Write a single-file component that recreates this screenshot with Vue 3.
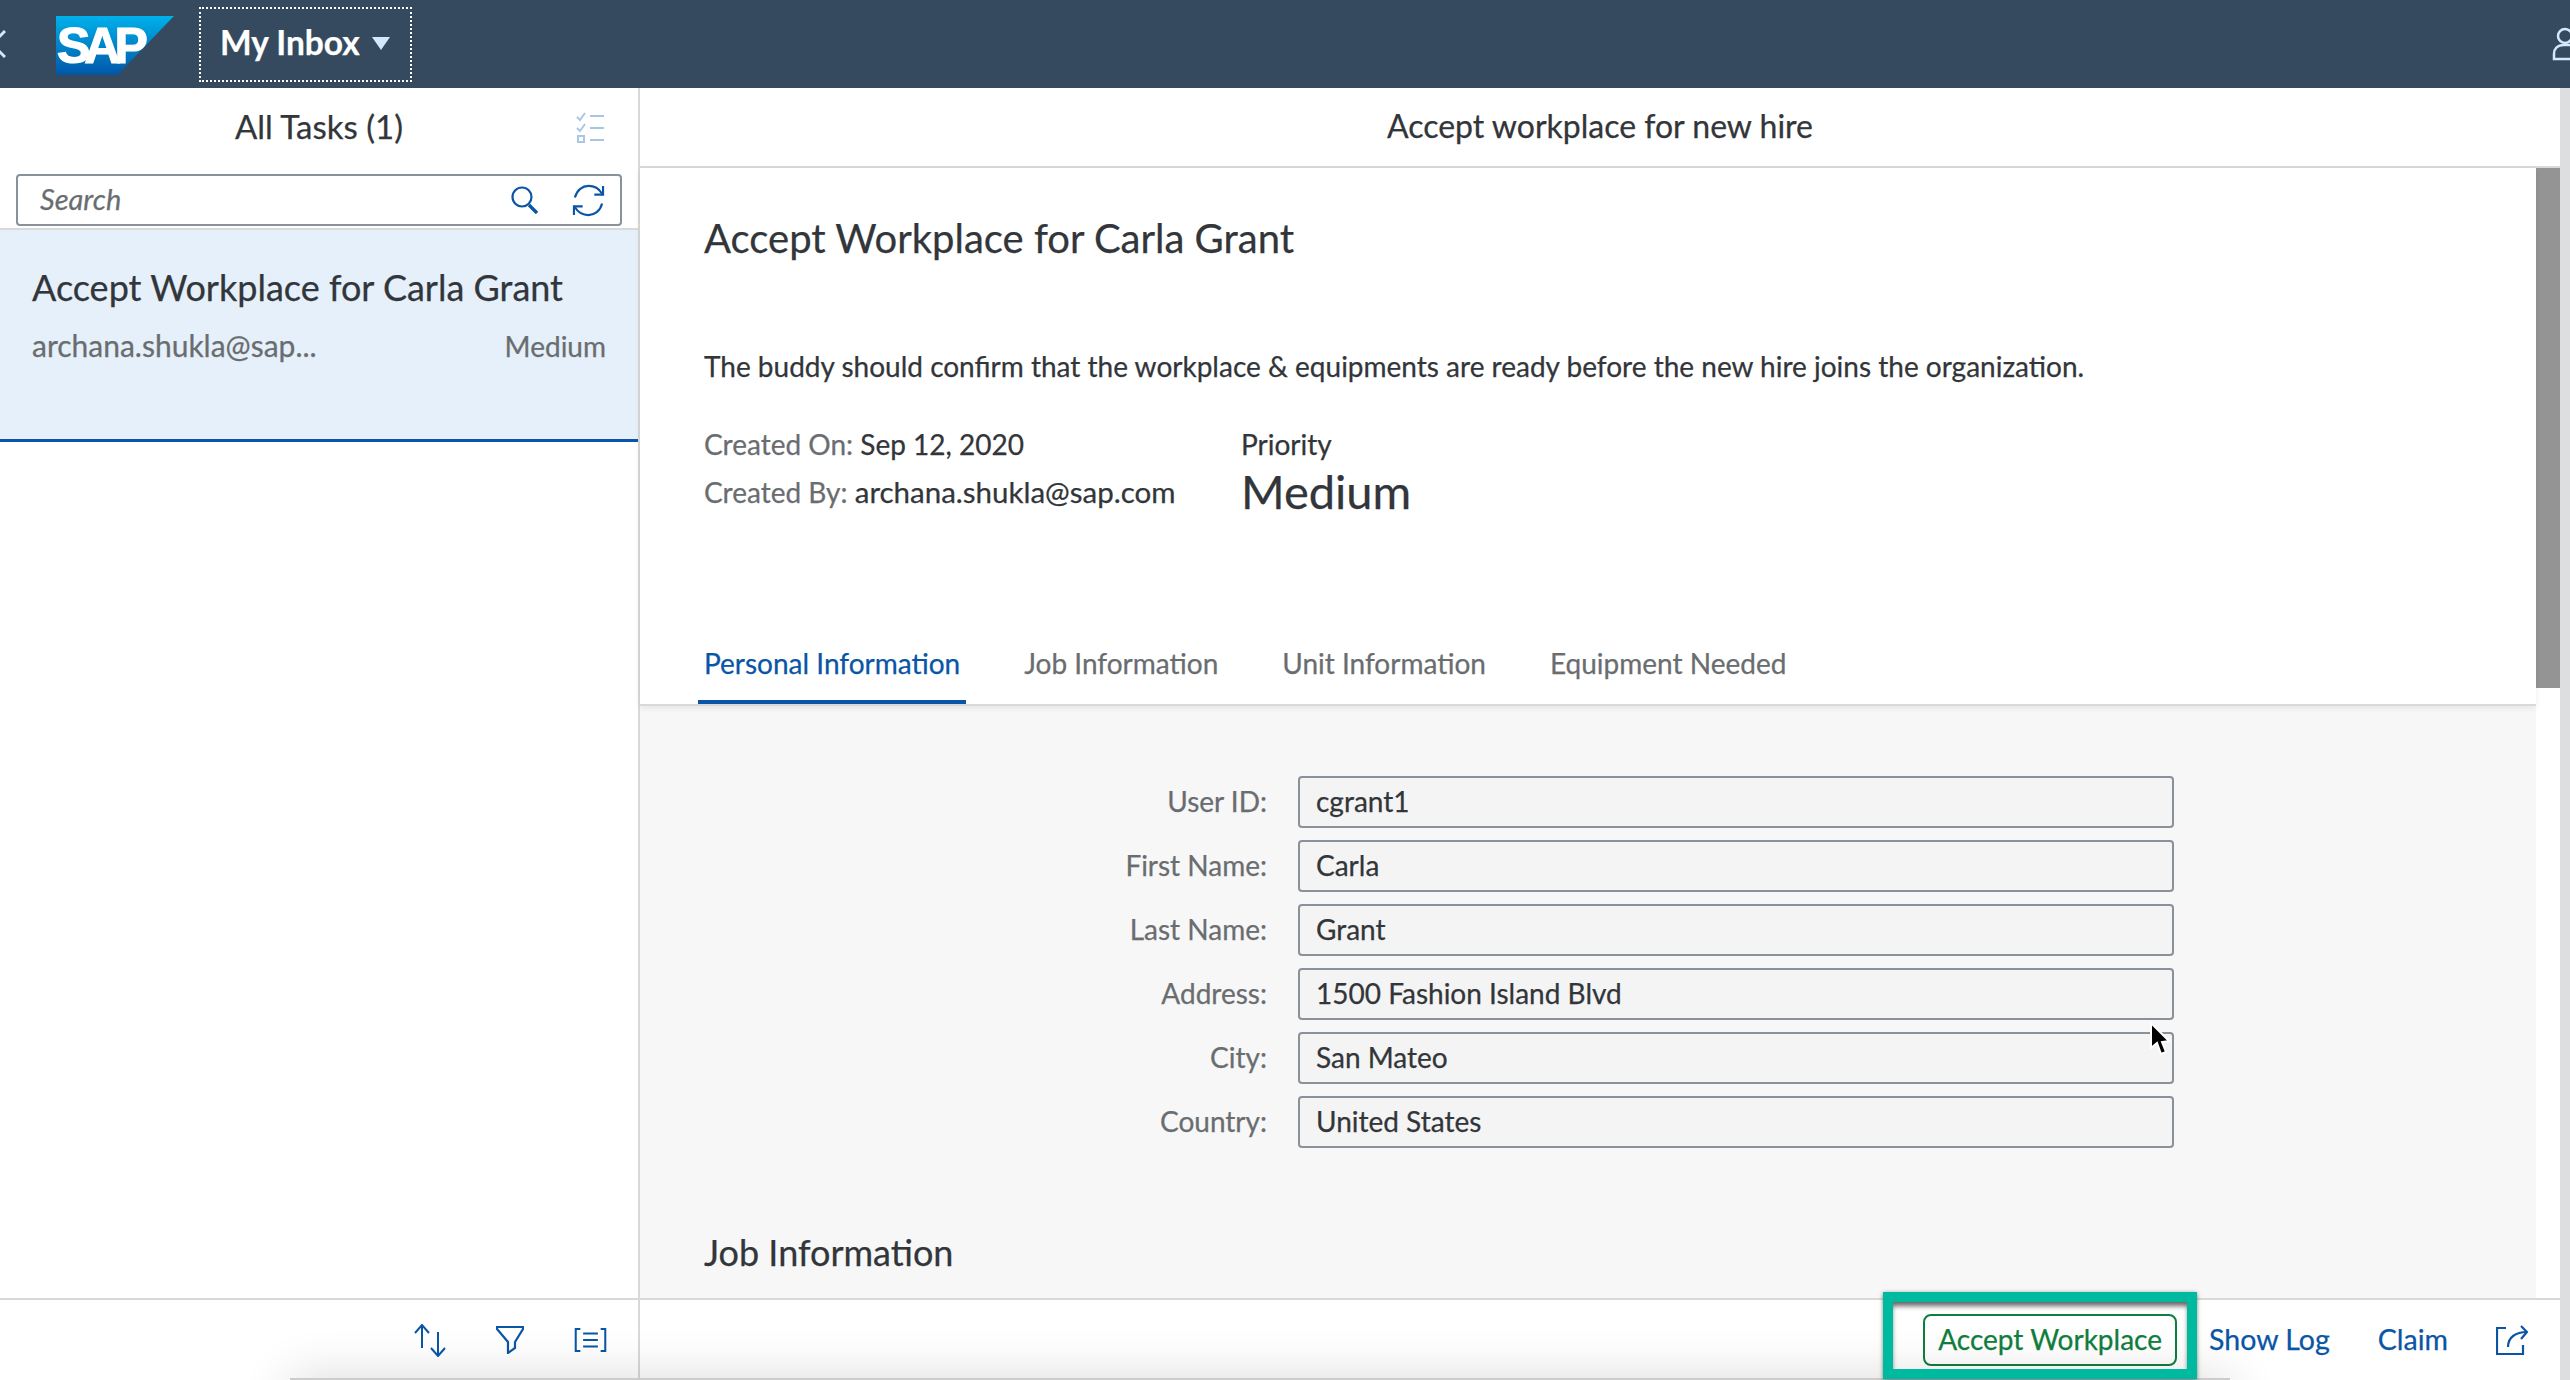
<script setup>
const fields = [
  { label: 'User ID:', value: 'cgrant1' },
  { label: 'First Name:', value: 'Carla' },
  { label: 'Last Name:', value: 'Grant' },
  { label: 'Address:', value: '1500 Fashion Island Blvd' },
  { label: 'City:', value: 'San Mateo' },
  { label: 'Country:', value: 'United States' }
]

const tabs = ['Personal Information', 'Job Information', 'Unit Information', 'Equipment Needed']
</script>

<template>
  <div class="page">
    <header class="shell">
      <svg class="back" width="6" height="28" viewBox="0 0 6 28"><path d="M5 1 L-8 14 L5 27" fill="none" stroke="#d1e8ff" stroke-width="3" /></svg>
      <div class="logo"><span>SAP</span></div>
      <button class="app-title">My Inbox <i class="caret"></i></button>
      <svg class="user" width="18" height="34" viewBox="0 0 18 34"><circle cx="13" cy="9" r="7" fill="none" stroke="#d1e8ff" stroke-width="2.5" /><path d="M18 18 H12 C5 18 2 22 2 27 V32 H18" fill="none" stroke="#d1e8ff" stroke-width="2.5" /></svg>
    </header>

    <div class="body">
      <aside class="master">
        <div class="bar-title master-title">
          <span>All Tasks (1)</span>
          <svg class="multi" width="30" height="32" viewBox="0 0 30 32" fill="none" stroke="#a9c6e6" stroke-width="2">
            <path d="M1 6 L4 9 L9 2" /><path d="M14 5 H28" />
            <path d="M1 17 L4 20 L9 13" /><path d="M14 17 H28" />
            <rect x="2" y="25" width="6" height="6" /><path d="M14 29 H28" />
          </svg>
        </div>
        <div class="search-row">
          <div class="search">
            <span class="placeholder">Search</span>
            <svg width="28" height="28" viewBox="0 0 28 28" fill="none" stroke="#0a55a5" stroke-width="2.2">
              <circle cx="11" cy="11" r="9.5" /><path d="M18 19 L26 27" stroke-width="3.4" />
            </svg>
            <svg width="33" height="33" viewBox="0 0 34 34" fill="none" stroke="#0a55a5" stroke-width="2.2">
              <path d="M3 14 C5 6 11 2 17 2 C23 2 28 5 31 10" /><path d="M32 2 V11 H23" />
              <path d="M31 20 C29 28 23 32 17 32 C11 32 6 29 3 24" /><path d="M2 32 V23 H11" />
            </svg>
          </div>
        </div>
        <div class="task">
          <div class="task-title">Accept Workplace for Carla Grant</div>
          <div class="task-meta">
            <span class="task-owner">archana.shukla@sap...</span>
            <span>Medium</span>
          </div>
        </div>
        <div class="master-fill"></div>
        <footer class="bar-foot master-foot">
          <svg width="32" height="33" viewBox="0 0 32 33" fill="none" stroke="#0a55a5" stroke-width="2">
            <path d="M8 1 V24" /><path d="M1 9 L8 1 L15 9" />
            <path d="M24 8 V32" /><path d="M17 24 L24 32 L31 24" />
          </svg>
          <svg width="28" height="28" viewBox="0 0 28 28" fill="none" stroke="#0a55a5" stroke-width="2.2">
            <path d="M1 1 H27 V3 L19 16 V22 L12 27 V16 L1 3 Z" />
          </svg>
          <svg width="33" height="24" viewBox="0 0 34 26" fill="none" stroke="#0a55a5" stroke-width="2.2">
            <path d="M6 1 H1 V25 H6" /><path d="M28 1 H33 V25 H28" />
            <path d="M9 6 H25 M9 13 H25 M9 20 H25" />
          </svg>
        </footer>
      </aside>

      <main class="detail">
        <div class="bar-title detail-title">Accept workplace for new hire</div>
        <div class="detail-scroll">
          <section class="head">
            <h1>Accept Workplace for Carla Grant</h1>
            <p class="desc">The buddy should confirm that the workplace &amp; equipments are ready before the new hire joins the organization.</p>
            <div class="attrs">
              <div class="attr-col">
                <div><span class="muted">Created On:</span> Sep 12, 2020</div>
                <div><span class="muted">Created By:</span> <span class="email">archana.shukla@sap.com</span></div>
              </div>
              <div class="priority">
                <div>Priority</div>
                <div class="priority-val">Medium</div>
              </div>
            </div>
            <nav class="tabs">
              <span v-for="(t, i) in tabs" :key="t" class="tab" :class="{ active: i === 0 }">{{ t }}</span>
            </nav>
          </section>
          <section class="content">
            <div class="form">
              <div v-for="f in fields" :key="f.label" class="row">
                <label>{{ f.label }}</label>
                <div class="input">{{ f.value }}</div>
              </div>
            </div>
            <h2>Job Information</h2>
          </section>
          <div class="scroll-track"><div class="scroll-thumb"></div></div>
        </div>
        <footer class="bar-foot detail-foot">
          <button class="accept">Accept Workplace<span class="frame"></span></button>
          <button class="link">Show Log</button>
          <button class="link">Claim</button>
          <svg class="share" width="32" height="30" viewBox="0 0 32 30" fill="none" stroke="#0a55a5" stroke-width="2.2">
            <path d="M10 3 H1 V29 H27 V20" /><path d="M12 22 C12 12 20 7 31 7" /><path d="M25 1 L31 7 L25 14" />
          </svg>
        </footer>
      </main>
      <div class="edge"></div>
    </div>

    <div class="under-shadow"></div>
    <svg class="cursor" width="24" height="36" viewBox="0 0 24 36">
      <path d="M3 2 V27 L9 22 L13 33 L18 31 L14 21 L21 20 Z" fill="#000" stroke="#fff" stroke-width="2" />
    </svg>
  </div>
</template>

<style>
html, body { margin: 0; background: #fff; }
</style>

<style scoped>
.page {
  position: relative;
  width: 2570px;
  height: 1380px;
  overflow: hidden;
  display: flex;
  flex-direction: column;
  font-family: Lato, "Open Sans", sans-serif;
  font-size: 28px;
  color: #32363a;
  -webkit-text-stroke: 0.25px;
}

.shell {
  height: 88px;
  flex: none;
  background: #354a5f;
  display: flex;
  align-items: center;
  position: relative;
}

.back { margin-right: 50px; }

.logo {
  width: 118px;
  height: 59px;
  background: linear-gradient(#00b1eb, #0057a8);
  clip-path: polygon(0 0, 100% 0, 52% 100%, 0 100%);
  display: flex;
  align-items: center;
  padding-left: 1px;
  box-sizing: border-box;
  margin-top: 3px;
}

.logo span {
  color: #fff;
  font: bold 50px "Liberation Sans", sans-serif;
  letter-spacing: -6px;
  -webkit-text-stroke: 1.2px #fff;
}

.app-title {
  margin-left: 25px;
  width: 213px;
  height: 75px;
  border: 2px dotted #fff;
  background: none;
  color: #fff;
  font: bold 33.5px Lato, sans-serif;
  display: flex;
  align-items: center;
  gap: 12px;
  padding: 0 0 5px 19px;
  box-sizing: border-box;
}

.caret {
  width: 0;
  height: 0;
  border-left: 9px solid transparent;
  border-right: 9px solid transparent;
  border-top: 13px solid #d1e8ff;
  margin-top: 4px;
}

.user { margin-left: auto; }

.body {
  flex: 1;
  display: flex;
  min-height: 0;
}

.master {
  width: 640px;
  flex: none;
  display: flex;
  flex-direction: column;
  border-right: 2px solid #d9d9d9;
  box-sizing: border-box;
}

.bar-title {
  height: 78px;
  flex: none;
  display: flex;
  align-items: center;
  justify-content: center;
  position: relative;
  font-size: 32px;
  padding-bottom: 3px;
  box-sizing: border-box;
}

.master-title { font-size: 33px; }

.multi {
  position: absolute;
  right: 32px;
  top: 23px;
}

.search-row {
  height: 64px;
  flex: none;
  padding: 8px 16px 0;
  box-sizing: border-box;
  border-bottom: 2px solid #d9d9d9;
}

.search {
  height: 52px;
  border: 2px solid #89919a;
  border-radius: 4px;
  display: flex;
  align-items: center;
  padding: 0 15px 0 22px;
  box-sizing: border-box;
  gap: 33px;
}

.placeholder {
  font-style: italic;
  font-size: 29px;
  color: #6a6d70;
  margin-right: auto;
  padding-bottom: 3px;
}

.task {
  height: 212px;
  flex: none;
  box-sizing: border-box;
  background: #e5f0fa;
  border-bottom: 3px solid #0a55a5;
  padding: 35px 32px 0;
}

.task-title { font-size: 36px; }

.task-meta {
  display: flex;
  justify-content: space-between;
  align-items: baseline;
  margin-top: 18px;
  color: #6a6d70;
}

.task-owner { font-size: 30px; }

.master-fill { flex: 1; }

.bar-foot {
  height: 82px;
  flex: none;
  border-top: 2px solid #d9d9d9;
  box-sizing: border-box;
  display: flex;
  align-items: center;
  justify-content: flex-end;
}

.master-foot {
  gap: 50px;
  padding-right: 31px;
}

.detail {
  flex: 1;
  display: flex;
  flex-direction: column;
  min-width: 0;
}

.detail-title {
  height: 80px;
  padding-bottom: 3px;
  border-bottom: 2px solid #d9d9d9;
}

.detail-scroll {
  flex: 1;
  min-height: 0;
  display: flex;
  flex-direction: column;
  position: relative;
  padding-right: 24px;
}

.head {
  height: 538px;
  flex: none;
  padding: 0 0 0 64px;
  box-sizing: border-box;
  border-bottom: 2px solid #d9d9d9;
  box-shadow: 0 2px 6px rgba(0, 0, 0, 0.08);
  position: relative;
  z-index: 1;
  background: #fff;
}

h1 {
  margin: 0;
  padding-top: 46px;
  font-size: 40px;
  font-weight: 400;
  line-height: 48px;
}

.desc {
  margin: 0;
  padding-top: 84px;
  line-height: 40px;
}

.attrs {
  display: flex;
  margin-top: 34px;
}

.attr-col {
  width: 537px;
  line-height: 48px;
}

.muted { color: #6a6d70; }

.email { font-size: 29.5px; }

.priority { line-height: 48px; }

.priority-val {
  font-size: 47px;
  line-height: 52px;
  margin-top: -3px;
}

.tabs {
  position: absolute;
  left: 58px;
  bottom: 0;
  display: flex;
  gap: 52px;
}

.tab {
  color: #6a6d70;
  height: 84px;
  padding: 6px 6px 0;
  display: flex;
  align-items: center;
  box-sizing: border-box;
  border-bottom: 4px solid transparent;
}

.tab.active {
  color: #0a55a5;
  border-bottom-color: #0a55a5;
}

.content {
  flex: 1;
  min-height: 0;
  background: #f7f7f7;
  padding-top: 70px;
}

.form {
  display: flex;
  flex-direction: column;
  gap: 12px;
}

.row {
  display: flex;
  align-items: center;
}

.row label {
  width: 627px;
  text-align: right;
  color: #6a6d70;
  padding-bottom: 2px;
}

.input {
  margin-left: 31px;
  width: 876px;
  height: 52px;
  border: 2px solid #89919a;
  border-radius: 4px;
  background: #f4f4f4;
  box-sizing: border-box;
  padding: 0 16px 2px;
  display: flex;
  align-items: center;
}

h2 {
  margin: 82px 0 0 64px;
  font-size: 36px;
  font-weight: 400;
}

.scroll-track {
  position: absolute;
  top: 0;
  bottom: 0;
  right: 0;
  width: 24px;
  background: #fff;
}

.scroll-thumb {
  height: 520px;
  background: #949494;
}

.detail-foot { padding-right: 32px; }

.accept {
  position: relative;
  width: 254px;
  height: 52px;
  border: 2px solid #107e3e;
  border-radius: 8px;
  background: none;
  color: #107e3e;
  font: 28px Lato, sans-serif;
  -webkit-text-stroke: 0.25px;
  padding: 0 0 2px;
}

.frame {
  position: absolute;
  z-index: 2;
  left: -42px;
  right: -22px;
  top: -24px;
  bottom: -15px;
  border: 10px solid #00ba9f;
  box-shadow: 0 1px 4px rgba(0, 0, 0, 0.5), inset 0 5px 5px -1px rgba(0, 0, 0, 0.6);
}

.link {
  background: none;
  border: 0;
  padding: 0 0 2px;
  color: #0a55a5;
  font: 28.5px Lato, sans-serif;
  -webkit-text-stroke: 0.25px;
}

.accept + .link { margin-left: 32px; }
.link + .link { margin-left: 48px; }
.share { margin-left: 48px; }

.edge {
  width: 10px;
  flex: none;
  background: #dcdee0;
}

.under-shadow {
  position: absolute;
  left: 290px;
  right: 340px;
  top: 1378px;
  height: 40px;
  background: #ccc;
  box-shadow: 0 0 50px rgba(0, 0, 0, 0.16);
}

.cursor {
  position: absolute;
  left: 2148px;
  top: 1021px;
}
</style>
